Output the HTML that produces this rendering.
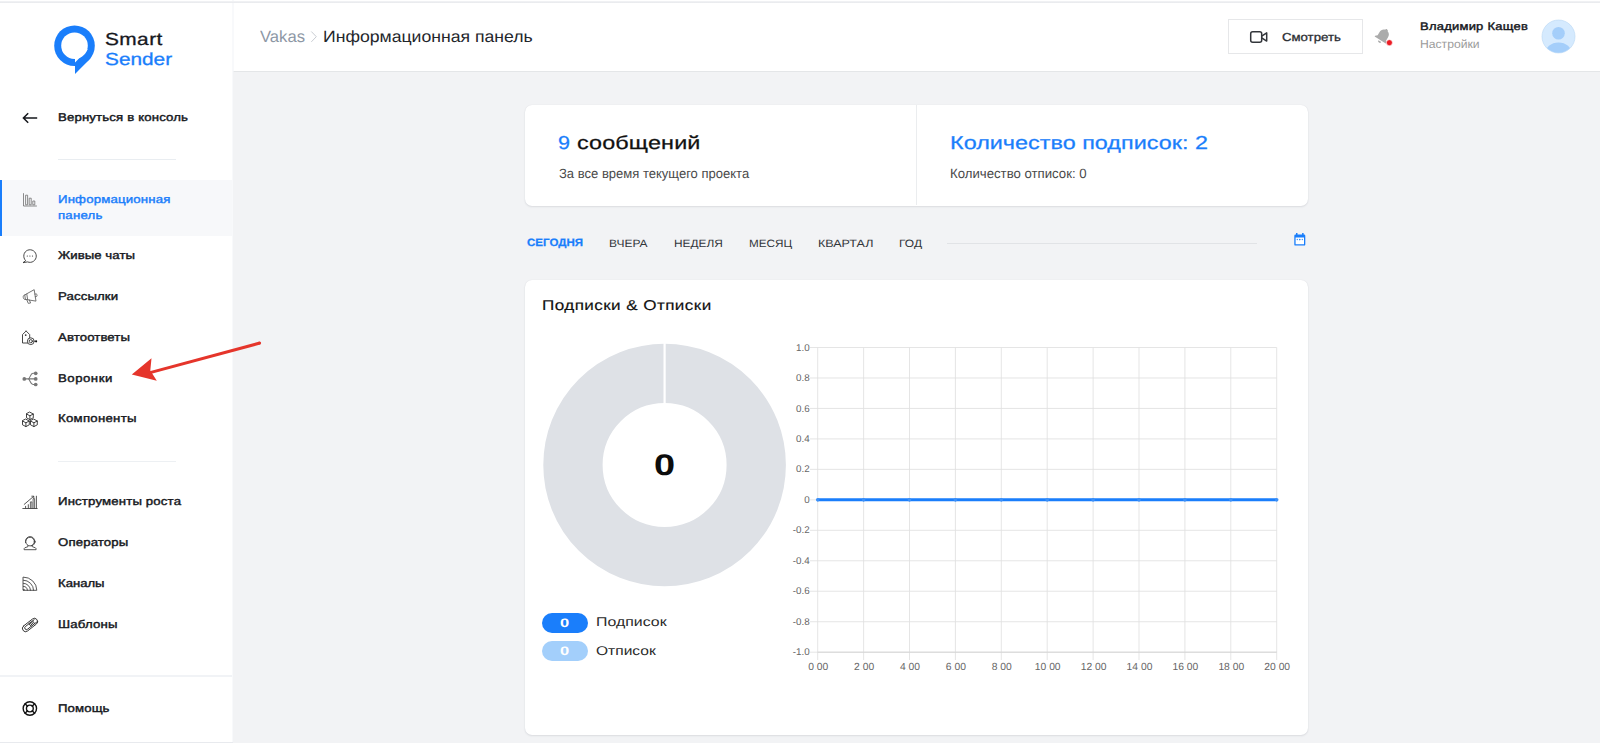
<!DOCTYPE html>
<html lang="ru">
<head>
<meta charset="utf-8">
<title>Smart Sender — Информационная панель</title>
<style>
*{box-sizing:border-box;margin:0;padding:0}
html,body{width:1600px;height:743px;overflow:hidden;background:#f2f3f5;font-family:"Liberation Sans",sans-serif;text-rendering:geometricPrecision}
body{position:relative}
.abs{position:absolute}
.tx{position:absolute;white-space:nowrap;line-height:1;transform-origin:0 50%;}
#sidebar{position:absolute;left:0;top:0;width:233px;height:743px;background:#fff;border-right:1px solid #f8f9fb}
#header{position:absolute;left:233px;top:0;width:1367px;height:72px;background:#fff;border-bottom:1px solid #e4e6e8;border-left:1px solid #f8f9fb}
#topline{position:absolute;left:0;top:1px;width:1600px;height:2px;background:linear-gradient(#f3f4f6,#e7e9ec)}
#botline{position:absolute;left:0;top:742px;width:233px;height:1px;background:#e8eaee}
.card{position:absolute;background:#fff;border-radius:7px;box-shadow:0 1px 2px rgba(30,40,60,.10),0 0 1px rgba(30,40,60,.10)}
.sep{position:absolute;height:1px;background:#e9edf1}
#active{position:absolute;left:0;top:180px;width:232px;height:56px;background:#f7f8fa;border-left:2px solid #1a7efb}
.pill{position:absolute;left:542px;width:45.5px;height:19.6px;border-radius:10px;color:#fff;font-weight:700;font-size:12px;line-height:19.6px;text-align:center}
svg{position:absolute;overflow:visible}
.yl{font-family:"Liberation Sans",sans-serif;font-size:10.3px;fill:#666}
</style>
</head>
<body>
<div id="sidebar"></div>
<div id="header"></div>
<div id="topline"></div>
<div id="botline"></div>
<div id="active"></div>
<div class="sep" style="left:58px;top:159px;width:118px"></div>
<div class="sep" style="left:58px;top:460.5px;width:118px;background:#edf0f3"></div>
<div class="sep" style="left:0;top:675px;width:232px;height:2px;background:#f1f3f6"></div>

<!-- cards -->
<div class="card" style="left:525px;top:105px;width:783px;height:100.5px"></div>
<div class="abs" style="left:916px;top:105px;width:1px;height:100px;background:#ebedef"></div>
<div class="card" style="left:525px;top:280px;width:783px;height:454.8px"></div>
<div class="sep" style="left:947px;top:242.5px;width:310px;background:#e1e3e6"></div>

<!-- legend pills -->
<div class="pill" style="top:613.2px;background:#1a7efb"></div>
<div class="pill" style="top:641.3px;background:#a3cffb"></div>

<svg width="1600" height="743" viewBox="0 0 1600 743" style="left:0;top:0">
<circle cx="664.6" cy="465" r="91.65" fill="none" stroke="#dee1e6" stroke-width="59.3"/>
<rect x="663.5" y="342.7" width="2.2" height="61.3" fill="#fff"/>
<path d="M817.70 347.5V660.0M863.60 347.5V660.0M909.50 347.5V660.0M955.40 347.5V660.0M1001.30 347.5V660.0M1047.20 347.5V660.0M1093.10 347.5V660.0M1139.00 347.5V660.0M1184.90 347.5V660.0M1230.80 347.5V660.0M1276.70 347.5V660.0M810.00 347.50H1276.7M810.00 377.97H1276.7M810.00 408.44H1276.7M810.00 438.91H1276.7M810.00 469.38H1276.7M810.00 499.85H1276.7M810.00 530.32H1276.7M810.00 560.79H1276.7M810.00 591.26H1276.7M810.00 621.73H1276.7M810.00 652.20H1276.7" stroke="#e0e0e0" stroke-width="0.85" fill="none"/>
<path d="M817.7 652.2H1276.7" stroke="#d4d4d4" stroke-width="0.9" fill="none"/>
<text class="yl" style="font-size:9.8px" x="809.6" y="350.60" text-anchor="end">1.0</text>
<text class="yl" style="font-size:9.8px" x="809.6" y="381.07" text-anchor="end">0.8</text>
<text class="yl" style="font-size:9.8px" x="809.6" y="411.54" text-anchor="end">0.6</text>
<text class="yl" style="font-size:9.8px" x="809.6" y="442.01" text-anchor="end">0.4</text>
<text class="yl" style="font-size:9.8px" x="809.6" y="472.48" text-anchor="end">0.2</text>
<text class="yl" style="font-size:9.8px" x="809.6" y="502.95" text-anchor="end">0</text>
<text class="yl" style="font-size:9.8px" x="809.6" y="533.42" text-anchor="end">-0.2</text>
<text class="yl" style="font-size:9.8px" x="809.6" y="563.89" text-anchor="end">-0.4</text>
<text class="yl" style="font-size:9.8px" x="809.6" y="594.36" text-anchor="end">-0.6</text>
<text class="yl" style="font-size:9.8px" x="809.6" y="624.83" text-anchor="end">-0.8</text>
<text class="yl" style="font-size:9.8px" x="809.6" y="655.30" text-anchor="end">-1.0</text>
<text class="yl" x="818.20" y="670" text-anchor="middle">0<tspan fill-opacity="0.12">:</tspan>00</text>
<text class="yl" x="864.10" y="670" text-anchor="middle">2<tspan fill-opacity="0.12">:</tspan>00</text>
<text class="yl" x="910.00" y="670" text-anchor="middle">4<tspan fill-opacity="0.12">:</tspan>00</text>
<text class="yl" x="955.90" y="670" text-anchor="middle">6<tspan fill-opacity="0.12">:</tspan>00</text>
<text class="yl" x="1001.80" y="670" text-anchor="middle">8<tspan fill-opacity="0.12">:</tspan>00</text>
<text class="yl" x="1047.70" y="670" text-anchor="middle">10<tspan fill-opacity="0.12">:</tspan>00</text>
<text class="yl" x="1093.60" y="670" text-anchor="middle">12<tspan fill-opacity="0.12">:</tspan>00</text>
<text class="yl" x="1139.50" y="670" text-anchor="middle">14<tspan fill-opacity="0.12">:</tspan>00</text>
<text class="yl" x="1185.40" y="670" text-anchor="middle">16<tspan fill-opacity="0.12">:</tspan>00</text>
<text class="yl" x="1231.30" y="670" text-anchor="middle">18<tspan fill-opacity="0.12">:</tspan>00</text>
<text class="yl" x="1277.20" y="670" text-anchor="middle">20<tspan fill-opacity="0.12">:</tspan>00</text>
<path d="M817.7 499.85H1276.7" stroke="#1a7efb" stroke-width="3" fill="none"/>
<circle cx="817.70" cy="499.85" r="1.8" fill="#3b8ff7"/>
<circle cx="863.60" cy="499.85" r="1.8" fill="#3b8ff7"/>
<circle cx="909.50" cy="499.85" r="1.8" fill="#3b8ff7"/>
<circle cx="955.40" cy="499.85" r="1.8" fill="#3b8ff7"/>
<circle cx="1001.30" cy="499.85" r="1.8" fill="#3b8ff7"/>
<circle cx="1047.20" cy="499.85" r="1.8" fill="#3b8ff7"/>
<circle cx="1093.10" cy="499.85" r="1.8" fill="#3b8ff7"/>
<circle cx="1139.00" cy="499.85" r="1.8" fill="#3b8ff7"/>
<circle cx="1184.90" cy="499.85" r="1.8" fill="#3b8ff7"/>
<circle cx="1230.80" cy="499.85" r="1.8" fill="#3b8ff7"/>
<circle cx="1276.70" cy="499.85" r="1.8" fill="#3b8ff7"/>
</svg>
<svg width="1600" height="743" viewBox="0 0 1600 743" style="left:0;top:0">
<!-- logo -->
<g fill="#1a7efb"><circle cx="74.5" cy="45.7" r="20.3"/><polygon points="75,45.7 75,73.9 90.4,58.4 90,45"/></g>
<g fill="#fff"><circle cx="74.5" cy="45.7" r="13.3"/><polygon points="75,45.7 75,62.4 87.9,49.4"/></g>
<!-- back arrow -->
<path d="M37.2 118H23.4M28.2 113.2 23.4 118 28.2 122.8" stroke="#15171c" stroke-width="1.5" fill="none"/>
<!-- sidebar icons -->
<g fill="none" stroke="#555" stroke-width="0.9" stroke-linejoin="round" stroke-linecap="round">
 <!-- bars -->
 <path stroke="#777" stroke-width="0.85" d="M23.5 193.6V206H36.5M25.6 204.4V195.2h2v9.2zM29.2 204.4V198.2h2v6.2zM32.8 204.4v-3.4h2v3.4z"/>
 <!-- chat -->
 <path d="M25.4 260.4A6.3 6.3 0 1 1 27.6 261.9L23.4 262.6Z" stroke="#333"/>
 <!-- megaphone -->
 <path transform="rotate(-9 30 296.500)" stroke="#666" stroke-width="0.85" d="M25.400 294 35.200 290.400V302L25.400 298.800ZM25.400 294c-1.700 0-2.200 1-2.200 2.400s.5 2.400 2.200 2.400M27.200 293.600v5.600M35.200 294.900h1.300c.9 0 .9 2.600 0 2.600h-1.300M26.300 299.200l.9 3.800h2.400l-.8-3.200" />
 <!-- tag -->
 <path d="M26.1 331 22.5 334.6V343h5.2M26.1 331 29.7 334.6v3.2" stroke="#333"/>
 <circle cx="30.8" cy="341.2" r="3.4" stroke="#333"/><circle cx="30.8" cy="341.2" r="1.6" stroke="#333"/>
 <!-- funnel -->
 <path d="M24.3 378.9H35.7M28 378.9c2.2 0 2.2-5.6 5-5.6h2.7M28 378.9c2.2 0 2.2 5.6 5 5.6h2.7" stroke="#777" stroke-width="1.1"/>
 <!-- components -->
 <g stroke="#222" stroke-width="0.85">
 <path d="M29.9 412.2 33.3 414v3.8L29.9 419.6 26.5 417.8V414ZM26.5 414 29.9 415.8 33.3 414M29.9 415.8v3.8"/>
 <path d="M25.9 419.2 29.3 421v3.8L25.9 426.6 22.5 424.8V421ZM22.5 421 25.9 422.8 29.3 421M25.9 422.8v3.8"/>
 <path d="M33.9 419.2 37.3 421v3.8L33.9 426.6 30.5 424.8V421ZM30.5 421 33.9 422.8 37.3 421M33.9 422.8v3.8"/>
 </g>
 <!-- growth -->
 <path d="M22.8 508.5H37.2M25.6 508.3v-2M28.3 508.3v-3.6M36.4 508.3V496.2M24.2 504.4 33.6 496.4M31.8 496.2h2v2" stroke="#444"/>
 <path d="M30.4 508.3v-6.4h1.5v6.4M33.1 508.3v-9.6h1.5v9.6" stroke="#444" stroke-width="0.8"/>
 <!-- operator -->
 <g stroke="#444">
 <circle cx="30.1" cy="541.6" r="4.3"/>
 <path d="M25.5 542.6v-1.4a4.6 4.6 0 0 1 9.2 0v1.4M34.7 540.4c1 0 1 2.6 0 2.6M34.4 543.4c-.4 1.6-1.6 2.2-3.2 2.3M28 545.4v1.2l-3.2 1.2c-.6.3-.7.8-.7 1.9H36.1c0-1.100-.1-1.600-.7-1.900L32.200 546.600v-1.200"/>
 </g>
 <!-- rss -->
 <g stroke="#444">
 <path d="M23.4 577.100A13.300 13.300 0 0 1 36.800 590.300H23.400Z"/>
 <path d="M23.400 580.200A10.200 10.200 0 0 1 33.600 590.300M23.400 583.300A7.100 7.100 0 0 1 30.500 590.300M23.400 586.400A4 4 0 0 1 27.400 590.300"/>
 </g>
 <!-- clip -->
 <g stroke="#333" transform="rotate(-38 30 625)">
 <rect x="21.2" y="621.8" width="17.6" height="6.4" rx="3.2"/>
 <path d="M36.500 623.400H25.400a1.700 1.700 0 0 0 0 3.400H38.200M30 623.400v3.200M31.500 623.400v3.200M33 623.400v3.200M34.500 623.400v3.200"/>
 </g>
 <!-- help -->
 <g stroke="#111" stroke-width="1.4">
 <circle cx="29.850" cy="708.500" r="6.700"/><circle cx="29.850" cy="708.500" r="3.400"/>
 <path d="M25.100 703.800 27.500 706.200M34.600 703.800 32.200 706.200M25.100 713.200 27.500 710.800M34.600 713.200 32.200 710.800"/>
 </g>
</g>
<g fill="#333"><circle cx="27.300" cy="256" r=".6"/><circle cx="29.900" cy="256" r=".6"/><circle cx="32.500" cy="256" r=".6"/>
<circle cx="25.700" cy="335.100" r=".9"/><circle cx="36.100" cy="341.300" r="1.100" fill="#111"/><circle cx="23.900" cy="589.700" r=".8"/></g>
<g fill="#777"><circle cx="24.300" cy="378.900" r="1.850"/><circle cx="35.700" cy="373.300" r="1.850"/><circle cx="35.700" cy="378.900" r="1.850"/><circle cx="35.700" cy="384.500" r="1.850"/></g>

<path d="M311.3 31.500 316.300 36.700 311.300 41.900" fill="none" stroke="#c9cdd3" stroke-width="1"/>
<!-- header: button -->
<rect x="1228.500" y="19.500" width="134" height="34" fill="#fff" stroke="#e6e7e9" stroke-width="1"/>
<g fill="none" stroke="#33363b" stroke-width="1.500" stroke-linejoin="round">
<rect x="1250.700" y="31.700" width="11" height="10.600" rx="2"/>
<path d="M1261.700 36.200 1266.700 32.900V41.100L1261.700 37.800"/>
</g>
<!-- bell -->
<g transform="rotate(32 1383 36)" fill="#ababab">
<path d="M1383 28.200c.9 0 1.500.6 1.500 1.400 2.300.7 3.500 2.600 3.500 5.100v3.400l1.800 1.900v.9h-13.600v-.9l1.800-1.900v-3.400c0-2.500 1.200-4.400 3.500-5.100 0-.8.600-1.400 1.500-1.400z"/>
<path d="M1381.300 42h3.400a1.700 1.700 0 0 1-3.400 0z"/>
</g>
<circle cx="1389.400" cy="42.700" r="3" fill="#ec1c24" stroke="#fff" stroke-width="0.6"/>
<!-- avatar -->
<defs><clipPath id="av"><circle cx="1558.500" cy="36.500" r="16.200"/></clipPath></defs>
<circle cx="1558.500" cy="36.500" r="16.500" fill="#d5eafe" stroke="#b9d6f3" stroke-width="0.600"/>
<g clip-path="url(#av)" fill="#a4cefa"><circle cx="1558.500" cy="33.300" r="6.300"/><ellipse cx="1558.500" cy="54" rx="13.500" ry="11.500"/></g>
<!-- calendar -->
<rect x="1295" y="236" width="9.600" height="8.800" fill="#fff"/>
<g fill="#1a7efb">
<path d="M1295.500 234.600h8.600a1.200 1.200 0 0 1 1.200 1.200v8.600a1.200 1.200 0 0 1-1.200 1.200h-8.600a1.200 1.200 0 0 1-1.200-1.200v-8.600a1.200 1.200 0 0 1 1.200-1.200zM1295.600 237.600v6.600h8.400v-6.600z" fill-rule="evenodd"/>
<rect x="1296" y="233" width="1.500" height="2.400"/><rect x="1302.100" y="233" width="1.500" height="2.400"/>
<circle cx="1297.300" cy="239.600" r=".75" opacity=".8"/><circle cx="1299.800" cy="239.600" r=".8"/><circle cx="1302.300" cy="239.600" r=".75" opacity=".8"/>
</g>
<!-- arrow annotation -->
<g fill="#e5352b" stroke="none">
<path d="M259.400 341.600 260.200 344.500 150.500 374.100 149.700 371.200Z"/>
<circle cx="259.600" cy="343" r="1.500"/>
<polygon points="131.800,374.600 151.500,358.300 150.300,370.600 156.800,380.700"/>
</g>
</svg>

<aside>
<div class="tx" id="lg1" style="left:105.2px;top:30.57px;font-size:17.4px;font-weight:400;color:#16181d;-webkit-text-stroke:0.3px #16181d;letter-spacing:0.340px;transform:scaleX(1.2000);">Smart</div>
<div class="tx" id="lg2" style="left:105.2px;top:51.07px;font-size:17.4px;font-weight:400;color:#1a7efb;-webkit-text-stroke:0.3px #1a7efb;transform:scaleX(1.1965);">Sender</div>
<div class="tx" id="s0" style="left:58px;top:113.02px;font-size:11.2px;font-weight:400;color:#15171c;-webkit-text-stroke:0.4px #15171c;letter-spacing:0.125px;transform:scaleX(1.1800);">Вернуться в консоль</div>
<div class="tx" id="s1a" style="left:58px;top:194.62px;font-size:11.2px;font-weight:400;color:#1a7efb;-webkit-text-stroke:0.4px #1a7efb;letter-spacing:0.144px;transform:scaleX(1.1800);">Информационная</div>
<div class="tx" id="s1b" style="left:58px;top:211.42px;font-size:11.2px;font-weight:400;color:#1a7efb;-webkit-text-stroke:0.4px #1a7efb;letter-spacing:0.174px;transform:scaleX(1.1800);">панель</div>
<div class="tx" id="s2" style="left:58px;top:251.02px;font-size:11.2px;font-weight:400;color:#15171c;-webkit-text-stroke:0.4px #15171c;letter-spacing:0.042px;transform:scaleX(1.1800);">Живые чаты</div>
<div class="tx" id="s3" style="left:58px;top:292.02px;font-size:11.2px;font-weight:400;color:#15171c;-webkit-text-stroke:0.4px #15171c;letter-spacing:0.102px;transform:scaleX(1.1800);">Рассылки</div>
<div class="tx" id="s4" style="left:58px;top:332.82px;font-size:11.2px;font-weight:400;color:#15171c;-webkit-text-stroke:0.4px #15171c;letter-spacing:0.078px;transform:scaleX(1.1800);">Автоответы</div>
<div class="tx" id="s5" style="left:58px;top:373.72px;font-size:11.2px;font-weight:400;color:#15171c;-webkit-text-stroke:0.4px #15171c;letter-spacing:0.427px;transform:scaleX(1.1800);">Воронки</div>
<div class="tx" id="s6" style="left:58px;top:414.12px;font-size:11.2px;font-weight:400;color:#15171c;-webkit-text-stroke:0.4px #15171c;letter-spacing:0.229px;transform:scaleX(1.1800);">Компоненты</div>
<div class="tx" id="s7" style="left:58px;top:496.92px;font-size:11.2px;font-weight:400;color:#15171c;-webkit-text-stroke:0.4px #15171c;letter-spacing:0.132px;transform:scaleX(1.1800);">Инструменты роста</div>
<div class="tx" id="s8" style="left:58px;top:537.82px;font-size:11.2px;font-weight:400;color:#15171c;-webkit-text-stroke:0.4px #15171c;letter-spacing:0.113px;transform:scaleX(1.1800);">Операторы</div>
<div class="tx" id="s9" style="left:58px;top:578.67px;font-size:11.2px;font-weight:400;color:#15171c;-webkit-text-stroke:0.4px #15171c;transform:scaleX(1.1707);">Каналы</div>
<div class="tx" id="s10" style="left:58px;top:620.32px;font-size:11.2px;font-weight:400;color:#15171c;-webkit-text-stroke:0.4px #15171c;letter-spacing:0.142px;transform:scaleX(1.1800);">Шаблоны</div>
<div class="tx" id="s11" style="left:58px;top:703.72px;font-size:11.2px;font-weight:400;color:#15171c;-webkit-text-stroke:0.4px #15171c;letter-spacing:0.085px;transform:scaleX(1.1800);">Помощь</div>
</aside>
<header>
<div class="tx" id="h1" style="left:260px;top:29.20px;font-size:16.3px;font-weight:400;color:#8d97a5;transform:scaleX(1.0216);">Vakas</div>
<div class="tx" id="h2" style="left:323.3px;top:29.20px;font-size:16.3px;font-weight:400;color:#23262b;transform:scaleX(1.0828);">Информационная панель</div>
<div class="tx" id="h3" style="left:1282px;top:33.07px;font-size:11.5px;font-weight:400;color:#2b2e33;-webkit-text-stroke:0.3px #2b2e33;transform:scaleX(1.1463);">Смотреть</div>
<div class="tx" id="h4" style="left:1420px;top:22.29px;font-size:11px;font-weight:400;color:#15171c;-webkit-text-stroke:0.4px #15171c;letter-spacing:0.202px;transform:scaleX(1.1800);">Владимир Кащев</div>
<div class="tx" id="h5" style="left:1420px;top:38.81px;font-size:11.8px;font-weight:400;color:#9b9b9b;transform:scaleX(1.0301);">Настройки</div>
</header>
<main>
<div class="tx" id="c1" style="left:558.2px;top:133.87px;font-size:18.7px;font-weight:400;color:#1a7efb;-webkit-text-stroke:0.25px #1a7efb;transform:scaleX(1.1532);">9</div>
<div class="tx" id="c2" style="left:576.6px;top:133.87px;font-size:18.7px;font-weight:400;color:#111;-webkit-text-stroke:0.25px #111;letter-spacing:0.113px;transform:scaleX(1.2500);">сообщений</div>
<div class="tx" id="c3" style="left:558.6px;top:167.36px;font-size:13.4px;font-weight:400;color:#4a4a4a;transform:scaleX(0.9728);">За все время текущего проекта</div>
<div class="tx" id="c4" style="left:950px;top:133.87px;font-size:18.7px;font-weight:400;color:#1a7efb;-webkit-text-stroke:0.25px #1a7efb;letter-spacing:0.018px;transform:scaleX(1.2500);">Количество подписок: 2</div>
<div class="tx" id="c5" style="left:950.4px;top:167.36px;font-size:13.4px;font-weight:400;color:#4a4a4a;transform:scaleX(0.9849);">Количество отписок: 0</div>
<div class="tx" id="t1" style="left:527px;top:237.63px;font-size:10.6px;font-weight:700;color:#1a7efb;-webkit-text-stroke:0.25px #1a7efb;transform:scaleX(1.0874);">СЕГОДНЯ</div>
<div class="tx" id="t2" style="left:609.2px;top:239.43px;font-size:10.6px;font-weight:400;color:#33363b;transform:scaleX(1.1306);">ВЧЕРА</div>
<div class="tx" id="t3" style="left:674.3px;top:239.43px;font-size:10.6px;font-weight:400;color:#33363b;transform:scaleX(1.1202);">НЕДЕЛЯ</div>
<div class="tx" id="t4" style="left:749.1px;top:239.43px;font-size:10.6px;font-weight:400;color:#33363b;transform:scaleX(1.1042);">МЕСЯЦ</div>
<div class="tx" id="t5" style="left:817.6px;top:239.43px;font-size:10.6px;font-weight:400;color:#33363b;transform:scaleX(1.1807);">КВАРТАЛ</div>
<div class="tx" id="t6" style="left:898.5px;top:239.43px;font-size:10.6px;font-weight:400;color:#33363b;transform:scaleX(1.1314);">ГОД</div>
<div class="tx" id="p1" style="left:542px;top:298.74px;font-size:14.25px;font-weight:400;color:#111;-webkit-text-stroke:0.15px #111;letter-spacing:0.341px;transform:scaleX(1.2000);">Подписки &amp; Отписки</div>
<div class="tx" id="p2" style="left:596px;top:616.35px;font-size:12.7px;font-weight:400;color:#2a2a2a;letter-spacing:0.017px;transform:scaleX(1.2500);">Подписок</div>
<div class="tx" id="p3" style="left:596px;top:644.85px;font-size:12.7px;font-weight:400;color:#2a2a2a;transform:scaleX(1.2271);">Отписок</div>
<div class="tx" id="z1" style="left:560.2px;top:616.57px;font-size:12.2px;font-weight:700;color:#fff;transform:scaleX(1.3567);">0</div>
<div class="tx" id="z2" style="left:560.2px;top:644.67px;font-size:12.2px;font-weight:700;color:#fff;transform:scaleX(1.3567);">0</div>
<div class="tx" id="d0" style="left:654.3px;top:450.57px;font-size:29.8px;font-weight:700;color:#0c0c0c;transform:scaleX(1.2728);">0</div>
</main>
</body>
</html>
